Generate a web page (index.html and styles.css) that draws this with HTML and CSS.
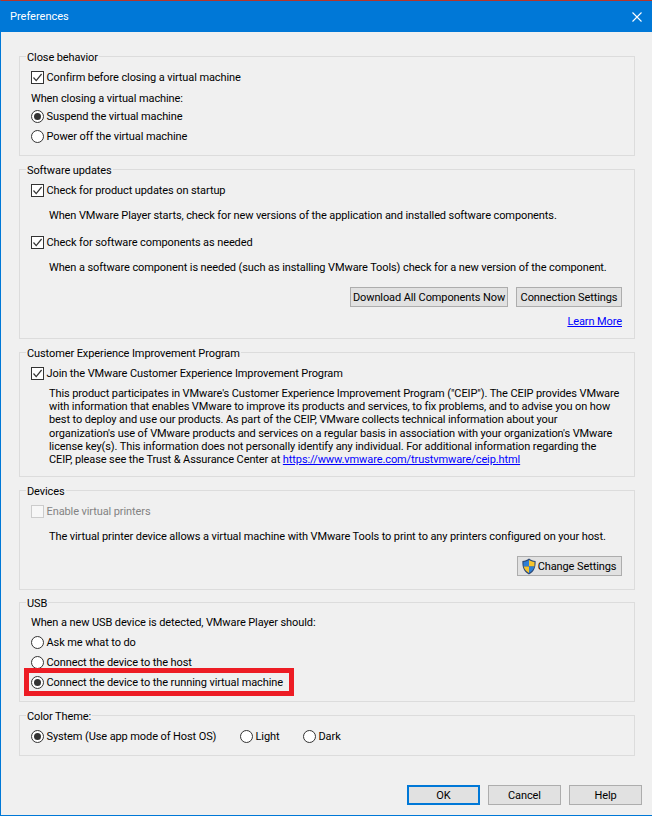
FILE: index.html
```html
<!DOCTYPE html>
<html lang="en">
<head>
<meta charset="utf-8">
<title>Preferences</title>
<link rel="stylesheet" href="styles.css">
</head>
<body>
<svg class="defs" width="0" height="0" aria-hidden="true">
  <symbol id="check" viewBox="0 0 13 13"><path d="M2.5 6.500 5.200 9.600 10.600 3" fill="none" stroke="#333" stroke-width="1.200"/></symbol>
  <symbol id="radio" viewBox="0 0 13 13"><circle cx="6.500" cy="6.500" r="6" fill="#fff" stroke="#333"/></symbol>
  <symbol id="radio-on" viewBox="0 0 13 13"><circle cx="6.500" cy="6.500" r="6" fill="#fff" stroke="#333"/><circle cx="6.500" cy="6.500" r="3.500" fill="#333"/></symbol>
</svg>
<div class="window">
  <header class="titlebar">
    <span class="title">Preferences</span>
    <svg class="close" width="10" height="10" viewBox="0 0 10 10"><path d="M.5.5l9 9M9.500.5l-9 9" stroke="#fff" stroke-width="1.100" fill="none"/></svg>
  </header>
  <main class="content">
    <fieldset class="group g1">
      <legend>Close behavior</legend>
      <div class="row h20"><span class="box"><svg width="13" height="13"><use href="#check"/></svg></span>Confirm before closing a virtual machine</div>
      <div class="plain t1">When closing a virtual machine:</div>
      <div class="row h20"><svg class="radio" width="13" height="13"><use href="#radio-on"/></svg>Suspend the virtual machine</div>
      <div class="row h20"><svg class="radio" width="13" height="13"><use href="#radio"/></svg>Power off the virtual machine</div>
    </fieldset>
    <fieldset class="group g2">
      <legend>Software updates</legend>
      <div class="row h20"><span class="box"><svg width="13" height="13"><use href="#check"/></svg></span>Check for product updates on startup</div>
      <p class="note">When VMware Player starts, check for new versions of the application and installed software components.</p>
      <div class="row h20 t2"><span class="box"><svg width="13" height="13"><use href="#check"/></svg></span>Check for software components as needed</div>
      <p class="note">When a software component is needed (such as installing VMware Tools) check for a new version of the component.</p>
      <div class="actions a1">
        <button class="btn dl">Download All Components Now</button>
        <button class="btn cs">Connection Settings</button>
      </div>
      <div class="learn"><a href="#">Learn More</a></div>
    </fieldset>
    <fieldset class="group g3">
      <legend>Customer Experience Improvement Program</legend>
      <div class="row h20"><span class="box"><svg width="13" height="13"><use href="#check"/></svg></span>Join the VMware Customer Experience Improvement Program</div>
      <p class="para">This product participates in VMware's Customer Experience Improvement Program ("CEIP"). The CEIP provides VMware<br>with information that enables VMware to improve its products and services, to fix problems, and to advise you on how<br>best to deploy and use our products. As part of the CEIP, VMware collects technical information about your<br>organization's use of VMware products and services on a regular basis in association with your organization's VMware<br>license key(s). This information does not personally identify any individual. For additional information regarding the<br>CEIP, please see the Trust &amp; Assurance Center at <a href="#">https://www.vmware.com/trustvmware/ceip.html</a></p>
    </fieldset>
    <fieldset class="group g4">
      <legend>Devices</legend>
      <div class="row h20 disabled"><span class="box off"></span>Enable virtual printers</div>
      <p class="note">The virtual printer device allows a virtual machine with VMware Tools to print to any printers configured on your host.</p>
      <div class="actions a1">
        <button class="btn ch">
          <svg class="shield" width="16" height="17" viewBox="0 0 16 17"><path d="M8 .6C6 2 4 2.800 1.400 3c-.2 6 1 10.500 6.600 13.400C13.600 13.500 14.800 9 14.600 3 12 2.800 10 2 8 .6Z" fill="#2f4a76"/><path d="M8 2v6.500H2.600C2.500 6.800 2.500 5.800 2.500 4 4.700 3.800 6.300 3.100 8 2Z" fill="#2f7fd6"/><path d="M8 2c1.700 1.100 3.300 1.800 5.500 2 0 1.800 0 2.800-.1 4.500H8V2Z" fill="#f7c52c"/><path d="M2.700 8.500H8v6.400C4.800 13 3.300 11 2.700 8.500Z" fill="#f7c52c"/><path d="M8 8.500h5.300c-.6 2.500-2.100 4.500-5.300 6.400V8.500Z" fill="#2f7fd6"/></svg>Change Settings
        </button>
      </div>
    </fieldset>
    <fieldset class="group g5">
      <legend>USB</legend>
      <div class="plain t3">When a new USB device is detected, VMware Player should:</div>
      <div class="row h20"><svg class="radio" width="13" height="13"><use href="#radio"/></svg>Ask me what to do</div>
      <div class="row h20"><svg class="radio" width="13" height="13"><use href="#radio"/></svg>Connect the device to the host</div>
      <div class="row h20"><svg class="radio" width="13" height="13"><use href="#radio-on"/></svg>Connect the device to the running virtual machine<span class="highlight"></span></div>
    </fieldset>
    <fieldset class="group g6">
      <legend>Color Theme:</legend>
      <div class="inline">
        <div class="row h20 i1"><svg class="radio" width="13" height="13"><use href="#radio-on"/></svg>System (Use app mode of Host OS)</div>
        <div class="row h20 i2"><svg class="radio" width="13" height="13"><use href="#radio"/></svg>Light</div>
        <div class="row h20"><svg class="radio" width="13" height="13"><use href="#radio"/></svg>Dark</div>
      </div>
    </fieldset>
  </main>
  <footer class="footer">
    <button class="btn foot ok">OK</button>
    <button class="btn foot">Cancel</button>
    <button class="btn foot">Help</button>
  </footer>
</div>
</body>
</html>
```
FILE: styles.css
```css
* { box-sizing: border-box; }
html, body { margin: 0; height: 816px; overflow: hidden; }
body {
  font-family: Roboto, "Noto Sans", sans-serif;
  font-size: 11px;
  letter-spacing: -0.1px;
  color: #000;
  background: #f0f0f0;
}
.defs { display: block; height: 0; }
.window {
  height: 816px;
  display: flex;
  flex-direction: column;
  border-top: 1px solid #b5352a;
  border-left: 1px solid #0078d7;
  border-bottom: 1px solid #0078d7;
  background: #f0f0f0;
}
.titlebar {
  height: 31px;
  flex: none;
  background: #0078d7;
  color: #fff;
  display: flex;
  align-items: center;
  justify-content: space-between;
  padding: 0 10px 0 9px;
  letter-spacing: 0;
}
.content {
  flex: none;
  padding: 17px 17px 0 18px;
  display: flex;
  flex-direction: column;
}
.group {
  margin: 0;
  min-width: 0;
  border: 1px solid #dcdcdc;
  padding: 3px 0 0 11px;
}
.group + .group { margin-top: 6px; }
.group.g5 { margin-top: 5px; }
legend {
  margin-left: -5px;
  padding: 0 1px;
  line-height: 17px;
  height: 15px;
}
.g1 { height: 107px; }
.g2 { height: 177px; }
.g3 { height: 132px; }
.g4 { height: 107px; }
.g5 { height: 107px; }
.g6 { height: 48px; }
.row {
  display: flex;
  align-items: center;
  position: relative;
  white-space: nowrap;
}
.h20 { height: 20px; }
.radio, .box { flex: none; margin-right: 2.5px; }
.box {
  width: 13px;
  height: 13px;
  background: #fff;
  border: 1px solid #333;
  display: flex;
  align-items: center;
  justify-content: center;
}
.box svg { flex: none; }
.box.off { border-color: #ccc; background: #f7f7f7; }
.disabled { color: #838383; }
.plain { white-space: nowrap; line-height: 15px; }
.t1 { margin-top: 4px; }
.t3 { margin: 2px 0 2px; }
.note { margin: 8px 0 0; padding-left: 18px; line-height: 15px; white-space: nowrap; }
.t2 { margin-top: 9px; }
.para { margin: 4px 0 0 18px; line-height: 13.2px; white-space: nowrap; }
a { color: #0000ff; text-decoration: underline; }
.actions { display: flex; justify-content: flex-end; gap: 8px; padding-right: 12px; }
.a1 { margin-top: 12px; }
.btn {
  font: inherit;
  letter-spacing: inherit;
  color: #000;
  height: 20px;
  padding: 0;
  background: #e1e1e1;
  border: 1px solid #adadad;
  display: inline-flex;
  align-items: center;
  justify-content: center;
  white-space: nowrap;
}
.dl { width: 158px; }
.cs { width: 106px; }
.ch { width: 105px; }
.shield { margin-left: -2px; margin-right: 1px; }
.learn { text-align: right; padding-right: 12px; line-height: 15px; margin-top: 7px; }
.highlight {
  position: absolute;
  left: -7px;
  top: -4px;
  width: 270px;
  height: 28px;
  border: 5px solid #ed1c24;
}
.inline { display: flex; }
.i1 { width: 209px; }
.i2 { width: 63px; }
.footer {
  flex: none;
  margin-top: auto;
  display: flex;
  justify-content: flex-end;
  gap: 8px;
  padding: 0 10px 10px 0;
}
.foot { width: 73px; }
.ok { border: 2px solid #0078d7; }
```
